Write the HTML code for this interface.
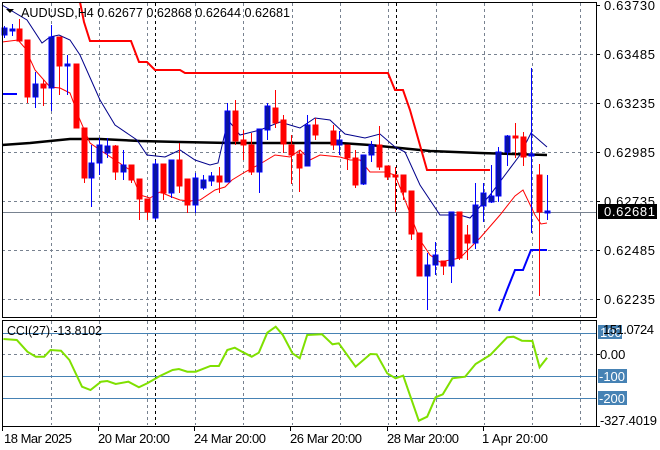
<!DOCTYPE html>
<html><head><meta charset="utf-8"><style>
html,body{margin:0;padding:0;background:#fff;}
svg{display:block;font-family:"Liberation Sans",sans-serif;}
</style></head><body>
<svg width="660" height="450" viewBox="0 0 660 450" xmlns="http://www.w3.org/2000/svg">
<rect width="660" height="450" fill="#fff"/>
<g stroke="#788290" stroke-width="1" stroke-dasharray="3,3" fill="none">
<path d="M2 54.5H597M2 103.5H597M2 152.5H597M2 201.5H597M2 250.5H597M2 299.5H597"/>
<path d="M51.5 3V317M99.5 3V317M147.5 3V317M195.5 3V317M243.5 3V317M292.5 3V317M340.5 3V317M388.5 3V317M436.5 3V317M484.5 3V317M532.5 3V317M580.5 3V317"/>
<path d="M51.5 321V425M99.5 321V425M147.5 321V425M195.5 321V425M243.5 321V425M292.5 321V425M340.5 321V425M388.5 321V425M436.5 321V425M484.5 321V425M532.5 321V425M580.5 321V425"/>
<path d="M2 354.5H597"/>
</g>
<g stroke="#000" stroke-dasharray="3,3" stroke-width="1">
<path d="M155.5 3V317M396.5 3V317M155.5 321V425M396.5 321V425"/>
</g>
<path d="M2 212.5H597" stroke="#788290" stroke-width="1"/>
<path d="M2 333.5H597M2 376.5H597M2 398.5H597" stroke="#4682b4" stroke-width="1"/>
<polyline fill="none" stroke="#000" stroke-width="2.5" points="2,145 30,143 50,141 70,139 100,139 140,141 180,142 230,143 300,143 340,143 370,145 400,148 430,151 480,153 547,155"/>
<polyline fill="none" stroke="#ff0000" stroke-width="2" points="80,2 84,22 90,41 131,41 139,62 147,62 155,70 180,70 185,73 388,73 395,90 403,90 410,110 427,170 490,170"/>
<polyline fill="none" stroke="#0000ff" stroke-width="2" points="2,94 17,94"/>
<polyline fill="none" stroke="#0000ff" stroke-width="2" points="499,311 507,290 515,270 523,270 531,250 547,250"/>
<polyline fill="none" stroke="#00008b" stroke-width="1" points="2,5 27,20 42,43 50,37 59,35 70,40 80,55 100,100 115,125 137,140 147,155 165,157 180,150 195,160 210,165 218,163 228,120 240,135 260,130 280,122 300,128 315,118 330,120 345,134 365,138 380,134 395,147 405,152 420,185 440,215 460,215 470,218 490,195 520,155 531,133 547,147"/>
<polyline fill="none" stroke="#ff0000" stroke-width="1" points="2,42 18,40 25,48 35,70 50,87 60,88 70,93 80,120 90,143 100,150 130,170 140,195 150,198 160,192 172,197 180,200 190,201 200,200 215,190 225,187 232,180 245,172 260,164 275,155 290,157 300,150 310,160 320,155 340,157 350,160 360,160 370,172 385,172 395,175 405,200 420,240 430,255 440,262 460,258 480,238 500,215 515,196 523,190 535,215 541,224 547,223"/>
<g stroke-width="1">
<g stroke="#0000ff" fill="#0a14a0">
<path d="M4.5 26V38M12.5 24V36M35.5 72V108M51.5 25V111M67.5 55V95M91.5 145V207M99.5 138V175M107.5 138V158M123.5 150V180M155.5 160V220M171.5 160V198M195.5 173V213M203.5 175V190M211.5 172V186M227.5 103V182M259.5 129V193M267.5 103V140M307.5 115V166M339.5 131V155M363.5 155V185M371.5 141V162M427.5 253V310M435.5 242V275M451.5 212V283M475.5 183V249M483.5 183V222M491.5 165V203M498.5 147V202M507.5 135V166M531.5 68V233M547.5 175V220"/>
<rect x="2" y="28" width="5" height="7"/><rect x="10" y="29" width="5" height="2"/>
<rect x="33" y="84" width="5" height="13"/><rect x="49" y="37" width="5" height="51"/>
<rect x="65" y="64" width="5" height="2"/><rect x="89" y="163" width="5" height="15"/>
<rect x="97" y="145" width="5" height="18"/><rect x="105" y="146" width="5" height="7"/>
<rect x="121" y="165" width="5" height="7"/><rect x="153" y="164" width="5" height="54"/>
<rect x="169" y="160" width="5" height="33"/><rect x="193" y="178" width="5" height="27"/>
<rect x="201" y="180" width="5" height="8"/><rect x="209" y="176" width="5" height="5"/>
<rect x="225" y="111" width="5" height="71"/><rect x="257" y="129" width="5" height="43"/>
<rect x="265" y="106" width="5" height="24"/><rect x="305" y="125" width="5" height="41"/>
<rect x="337" y="140" width="5" height="5"/><rect x="361" y="155" width="5" height="29"/>
<rect x="369" y="145" width="5" height="10"/><rect x="425" y="265" width="5" height="11"/>
<rect x="433" y="255" width="5" height="10"/><rect x="449" y="212" width="5" height="54"/>
<rect x="473" y="205" width="5" height="38"/><rect x="481" y="193" width="5" height="13"/>
<rect x="489" y="196" width="5" height="6"/><rect x="496" y="152" width="5" height="44"/>
<rect x="505" y="136" width="5" height="16"/><rect x="529" y="154" width="5" height="2"/>
<rect x="545" y="211" width="5" height="2"/>
</g>
<g stroke="#ff0000" fill="#ff0000">
<path d="M19.5 19V41M27.5 40V103M43.5 80V106M59.5 37V95M76.5 64V128M84.5 128V183M115.5 145V180M131.5 165V183M139.5 179V220M147.5 199V220M163.5 165V200M179.5 143V193M187.5 179V213M219.5 167V193M235.5 100V145M243.5 130V160M251.5 133V175M275.5 90V128M283.5 115V153M291.5 135V184M299.5 150V192M315.5 118V140M333.5 125V150M347.5 145V170M355.5 150V188M379.5 126V170M387.5 166V180M395.5 167V212M403.5 175V200M411.5 191V240M419.5 233V276M443.5 261V275M459.5 212V260M467.5 225V260M515.5 123V158M523.5 132V166M539.5 164V296"/>
<rect x="17" y="29" width="5" height="12"/><rect x="25" y="40" width="5" height="57"/>
<rect x="41" y="84" width="5" height="4"/><rect x="57" y="37" width="5" height="29"/>
<rect x="74" y="64" width="5" height="64"/><rect x="82" y="128" width="5" height="50"/>
<rect x="113" y="146" width="5" height="26"/><rect x="129" y="165" width="5" height="15"/>
<rect x="137" y="179" width="5" height="20"/><rect x="145" y="199" width="5" height="13"/>
<rect x="161" y="164" width="5" height="29"/><rect x="177" y="160" width="5" height="26"/>
<rect x="185" y="179" width="5" height="26"/><rect x="217" y="176" width="5" height="6"/>
<rect x="233" y="111" width="5" height="30"/><rect x="241" y="140" width="5" height="5"/>
<rect x="249" y="145" width="5" height="27"/><rect x="273" y="108" width="5" height="15"/>
<rect x="281" y="120" width="5" height="24"/><rect x="289" y="145" width="5" height="10"/>
<rect x="297" y="154" width="5" height="14"/><rect x="313" y="125" width="5" height="10"/>
<rect x="331" y="131" width="5" height="14"/><rect x="345" y="145" width="5" height="13"/>
<rect x="353" y="158" width="5" height="27"/><rect x="377" y="145" width="5" height="22"/>
<rect x="385" y="166" width="5" height="11"/><rect x="393" y="175" width="5" height="2"/>
<rect x="401" y="175" width="5" height="17"/><rect x="409" y="191" width="5" height="43"/>
<rect x="417" y="233" width="5" height="43"/><rect x="441" y="261" width="5" height="5"/>
<rect x="457" y="212" width="5" height="46"/><rect x="465" y="235" width="5" height="8"/>
<rect x="513" y="136" width="5" height="2"/><rect x="521" y="137" width="5" height="20"/>
<rect x="537" y="175" width="5" height="37"/>
</g>
</g>
<polyline fill="none" stroke="#7fe000" stroke-width="2" points="3.4,339 16.8,340 27.4,351.7 35.8,356.7 44.2,356.7 50.5,350 61,350.7 69.4,360 82,386.7 90.5,390 101,381.7 107.3,381 115.7,384 128.4,381.7 138.9,387.3 147.3,383.3 159.9,376 172.6,370 178.9,369 187.3,371.7 195.7,371.7 210.4,366 218.9,366 227.3,350 234.8,347.7 242,351.7 251.7,356.7 258.8,352.7 267.3,332.7 275.7,326.7 282.8,335 292.5,353.3 299.7,358.3 307.2,335 322,334.3 332.5,344.3 338.8,343.3 355.6,366.7 370.4,354 376.7,354.3 387.2,373.3 395.6,378.3 403.2,375.7 418.8,420.7 427.2,416.7 435.6,397.3 442.8,394.3 452.4,378.3 465.1,376.7 475.6,364 490.3,355 507.2,337.3 513.5,336.7 521.9,340.7 532.4,341 539.6,367.3 547.1,357.7"/>
<rect x="2.5" y="2.5" width="594" height="315" fill="none" stroke="#000" stroke-width="1"/>
<rect x="2.5" y="320.5" width="594" height="106" fill="none" stroke="#000" stroke-width="1"/>
<g stroke="#000"><path d="M597 5.5h3M597 54.5h3M597 103.5h3M597 152.5h3M597 201.5h3M597 250.5h3M597 299.5h3M597 354.5h3M597 426.5h3M2.5 427V431M98.5 427V431M194.5 427V431M290.5 427V431M387.5 427V431M483.5 427V431"/></g>
<path d="M6 9l8 0-4 4z" fill="#000"/>
<text x="21" y="17" font-size="13" fill="#000" textLength="269" lengthAdjust="spacingAndGlyphs">AUDUSD,H4  0.62677 0.62868 0.62644 0.62681</text>
<text x="7" y="335" font-size="13" fill="#000" textLength="95" lengthAdjust="spacingAndGlyphs">CCI(27) -13.8102</text>
<g font-size="13" fill="#000">
<text x="604" y="10" textLength="51">0.63730</text>
<text x="604" y="59" textLength="51">0.63485</text>
<text x="604" y="108" textLength="51">0.63235</text>
<text x="604" y="157" textLength="51">0.62985</text>
<text x="604" y="206" textLength="51">0.62735</text>
<text x="604" y="255" textLength="51">0.62485</text>
<text x="604" y="304" textLength="51">0.62235</text>
</g>
<rect x="598" y="204" width="59" height="15" fill="#000"/>
<text x="604" y="216" font-size="13" fill="#fff" textLength="51">0.62681</text>
<rect x="598" y="325" width="24" height="14" fill="#4682b4"/>
<rect x="598" y="369" width="29" height="14" fill="#4682b4"/>
<rect x="598" y="391" width="29" height="14" fill="#4682b4"/>
<g font-size="13">
<text x="600" y="337" fill="#fff">100</text>
<text x="603" y="334" fill="#000" textLength="51">151.0724</text>
<text x="600" y="359" fill="#000">0.00</text>
<text x="599" y="381" fill="#fff">-100</text>
<text x="599" y="403" fill="#fff">-200</text>
<text x="600" y="425" fill="#000" textLength="57">-327.4019</text>
</g>
<g font-size="13" fill="#000">
<text x="4" y="443" textLength="68">18 Mar 2025</text>
<text x="98" y="443" textLength="72">20 Mar 20:00</text>
<text x="194" y="443" textLength="72">24 Mar 20:00</text>
<text x="290" y="443" textLength="72">26 Mar 20:00</text>
<text x="387" y="443" textLength="72">28 Mar 20:00</text>
<text x="482" y="443" textLength="66">1 Apr 20:00</text>
</g>
</svg>
</body></html>
